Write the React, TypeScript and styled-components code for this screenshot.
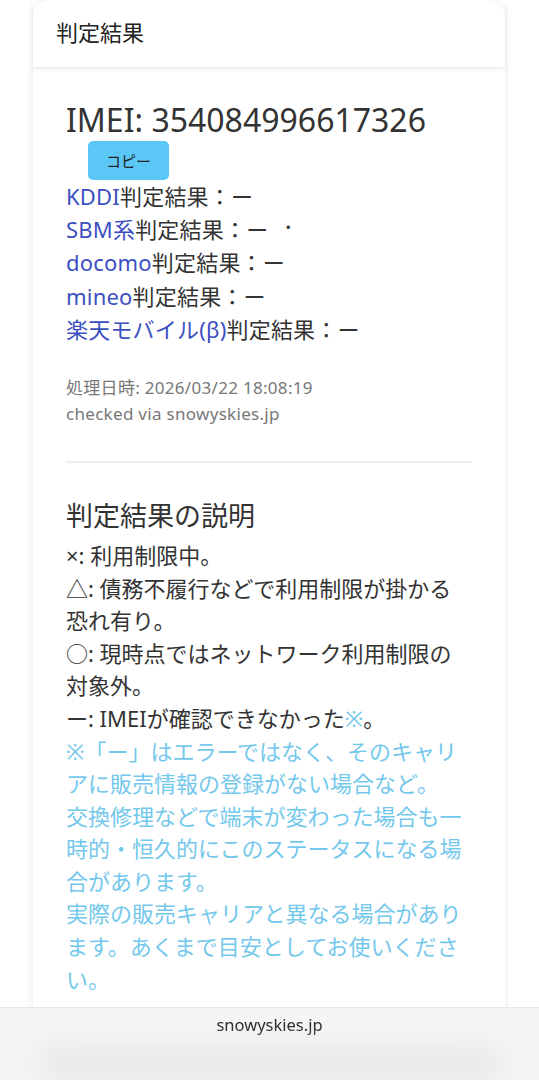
import styled, { createGlobalStyle } from 'styled-components';

const sans = `"Noto Sans", "Noto Sans CJK JP", sans-serif`;

const GlobalStyle = createGlobalStyle`
  * { box-sizing: border-box; }
  html, body { margin: 0; padding: 0; background: #fff; }
  body { font-family: ${sans}; color: #333; }
`;

const Page = styled.div`
  padding: 0 34px 60px 33px;
`;

const Card = styled.section`
  background: #fff;
  border-radius: 18px 18px 0 0;
  box-shadow: 0 0 10px rgba(0, 0, 0, 0.09);
`;

const CardHeader = styled.header`
  height: 67px;
  display: flex;
  align-items: center;
  padding: 0 23px 6px;
  font-size: 22px;
  color: #222;
  box-shadow: 0 2px 4px rgba(0, 0, 0, 0.08);
`;

const CardBody = styled.div`
  padding: 31px 33px 60px;
`;

const Imei = styled.h2`
  margin: 0;
  padding-top: 2px;
  font-size: 32px;
  line-height: 40px;
  font-weight: 400;
  color: #333;
`;

const ButtonRow = styled.div`
  display: flex;
  padding-left: 22px;
  margin-top: 1px;
`;

const CopyButton = styled.button`
  width: 81px;
  height: 39px;
  border: 0;
  border-radius: 5px;
  background: #5bc7f7;
  font-family: ${sans};
  font-size: 15px;
  color: #222;
  cursor: pointer;
`;

const ResultList = styled.div`
  display: flex;
  flex-direction: column;
`;

const ResultLine = styled.div`
  height: 33.2px;
  font-size: 22px;
  line-height: 33.2px;
  color: #333;
  letter-spacing: 0.2px;
`;

const Carrier = styled.a`
  color: #3c4fc2;
  text-decoration: none;
`;

const Dot = styled.span`
  margin-left: 12px;
  font-size: 16px;
  line-height: 0;
  vertical-align: 0.3em;
`;

const Meta = styled.div`
  margin-top: 29px;
  font-size: 17px;
  line-height: 26px;
  letter-spacing: 0.3px;
  color: #777;
`;

const Divider = styled.hr`
  margin: 34px 0 0;
  border: 0;
  border-top: 2px solid #eee;
`;

const ExplainTitle = styled.h3`
  margin: 35px 0 5px;
  font-size: 27px;
  line-height: 36px;
  font-weight: 400;
  color: #333;
`;

const ExplainText = styled.p`
  margin: 0;
  max-width: 398px;
  font-size: 22px;
  line-height: 32.6px;
  color: #333;
`;

const Note = styled.span`
  color: #74c8ec;
`;

const BrowserBar = styled.footer`
  position: fixed;
  left: 0;
  right: 0;
  bottom: 0;
  height: 73px;
  padding-top: 6px;
  background: rgba(245, 245, 245, 0.98);
  border-top: 1px solid #e8e8e8;
  display: flex;
  flex-direction: column;
  align-items: center;
  overflow: hidden;
`;

const Url = styled.div`
  font-size: 16.5px;
  line-height: 22px;
  color: #222;
`;

const BlurredToolbar = styled.div`
  align-self: stretch;
  height: 46px;
  margin: 10px 36px 0;
  border-radius: 23px;
  background: #e8e8e8;
  filter: blur(14px);
`;

const carriers = ['KDDI', 'SBM系', 'docomo', 'mineo', '楽天モバイル(β)'];

export default function App() {
  return (
    <>
      <GlobalStyle />
      <Page>
        <Card>
          <CardHeader>判定結果</CardHeader>
          <CardBody>
            <Imei>IMEI: 354084996617326</Imei>
            <ButtonRow>
              <CopyButton>コピー</CopyButton>
            </ButtonRow>
            <ResultList>
              {carriers.map((c) => (
                <ResultLine key={c}>
                  <Carrier href="#">{c}</Carrier>判定結果：ー
                  {c === 'SBM系' && <Dot>・</Dot>}
                </ResultLine>
              ))}
            </ResultList>
            <Meta>
              処理日時: 2026/03/22 18:08:19
              <br />
              checked via snowyskies.jp
            </Meta>
            <Divider />
            <ExplainTitle>判定結果の説明</ExplainTitle>
            <ExplainText>
              ×: 利用制限中。
              <br />
              △: 債務不履行などで利用制限が掛かる恐れ有り。
              <br />
              ○: 現時点ではネットワーク利用制限の対象外。
              <br />
              ー: IMEIが確認できなかった<Note>※</Note>。
              <br />
              <Note>
                ※「ー」はエラーではなく、そのキャリアに販売情報の登録がない場合など。
                <br />
                交換修理などで端末が変わった場合も一時的・恒久的にこのステータスになる場合があります。
                <br />
                実際の販売キャリアと異なる場合があります。あくまで目安としてお使いください。
              </Note>
            </ExplainText>
          </CardBody>
        </Card>
      </Page>
      <BrowserBar>
        <Url>snowyskies.jp</Url>
        <BlurredToolbar />
      </BrowserBar>
    </>
  );
}
